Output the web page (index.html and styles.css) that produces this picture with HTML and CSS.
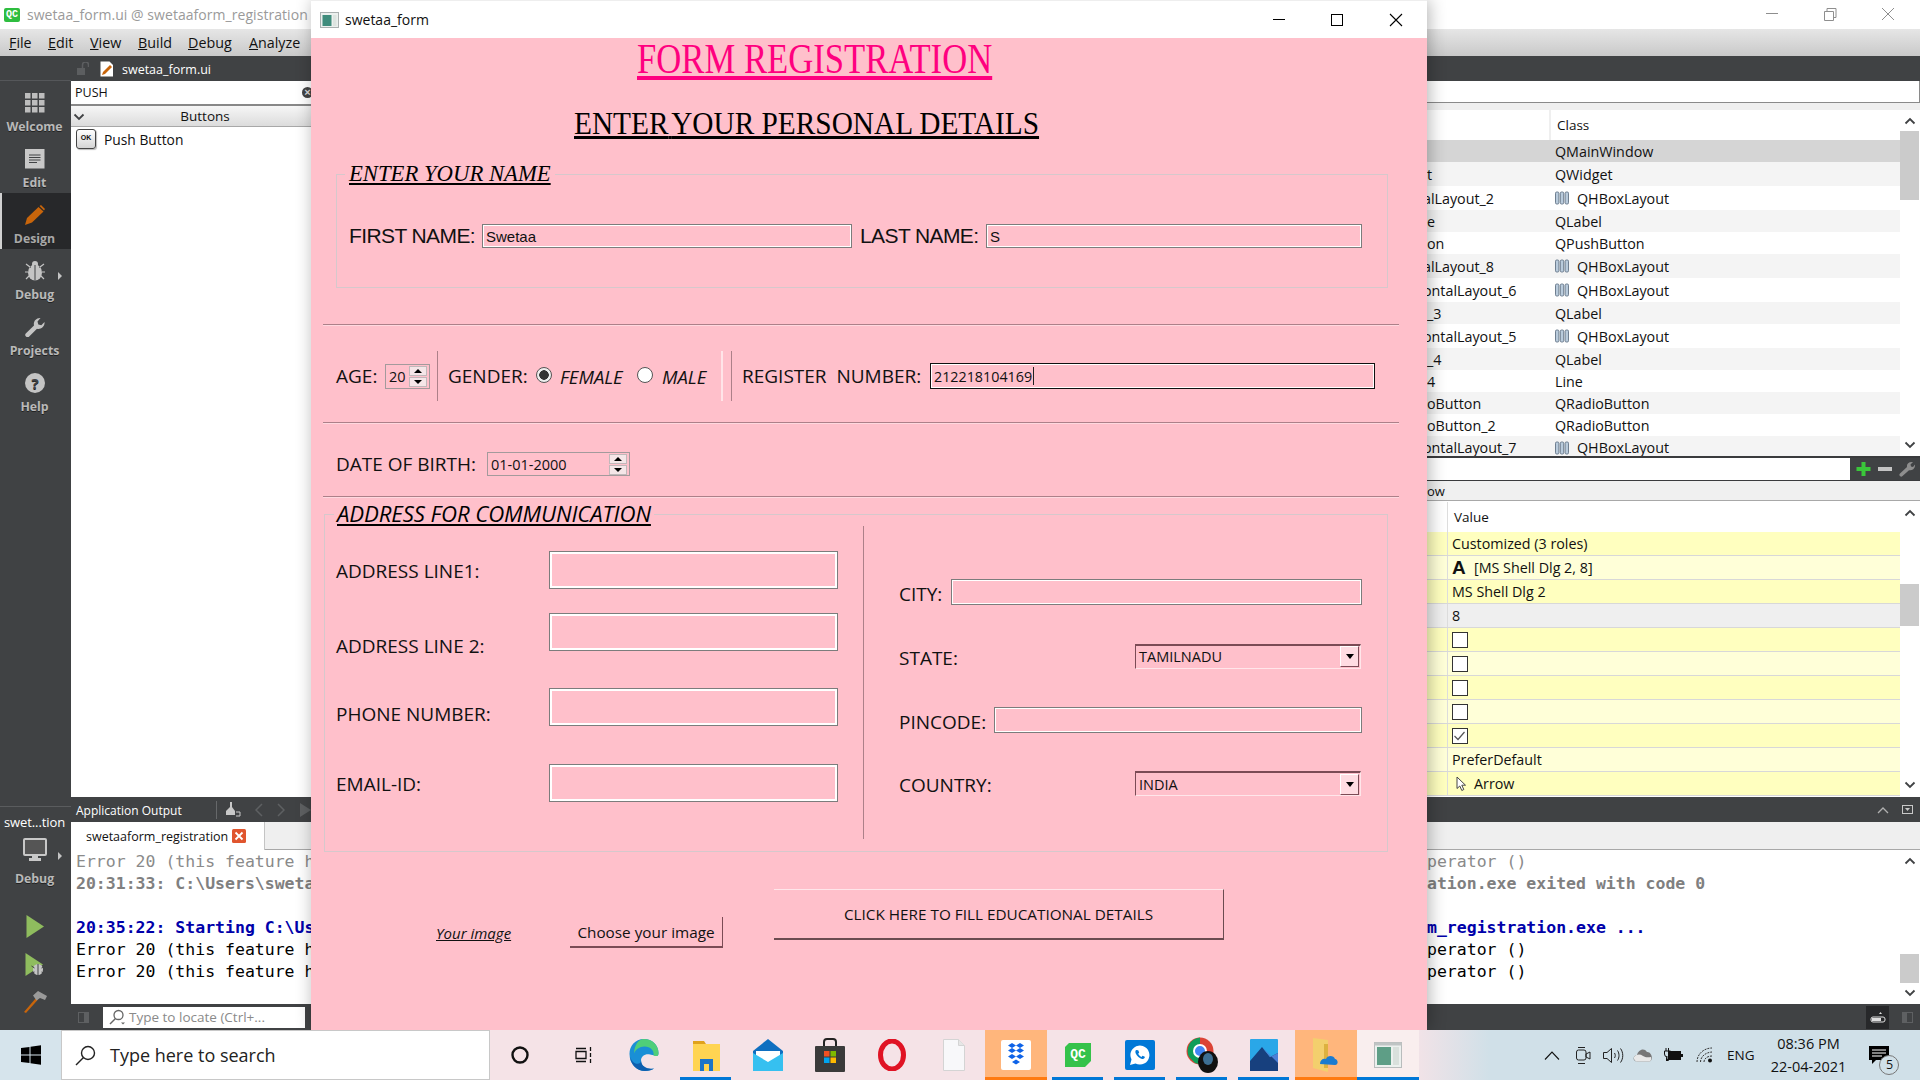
FILE: index.html
```html
<!DOCTYPE html>
<html lang="en">
<head>
<meta charset="utf-8">
<title>swetaa_form</title>
<link rel="stylesheet" href="styles.css">
</head>
<body>
<svg class="defs" width="0" height="0" aria-hidden="true">
  <symbol id="hbox" viewBox="0 0 14 14">
    <g fill="#b9cbdc" stroke="#6f7f90" stroke-width="1"><rect x="0.5" y="1" width="3.4" height="12" rx="1.2"/><rect x="5.3" y="1" width="3.4" height="12" rx="1.2"/><rect x="10.1" y="1" width="3.4" height="12" rx="1.2"/></g>
  </symbol>
  <symbol id="chev-up" viewBox="0 0 12 8"><path d="M1.5 6.5 6 2l4.500 4.500" fill="none" stroke="#404244" stroke-width="1.800"/></symbol>
  <symbol id="chev-down" viewBox="0 0 12 8"><path d="M1.500 1.500 6 6l4.500-4.500" fill="none" stroke="#404244" stroke-width="1.800"/></symbol>
</svg>
<div class="desktop">
  <div class="creator">
    <header class="c-title">
      <span class="qc-logo">QC</span>
      <span class="c-title-text">swetaa_form.ui @ swetaaform_registration</span>
      <div class="win-controls win-controls-dim">
        <svg width="58" height="29" viewBox="0 0 58 29"><path d="M23 13.500h12" stroke="#8e8e8e"/></svg>
        <svg width="58" height="29" viewBox="0 0 58 29"><path d="M23.500 11.500h9v9h-9zM26 11.500V8.500h9v9h-2.500" fill="none" stroke="#8e8e8e"/></svg>
        <svg width="58" height="29" viewBox="0 0 58 29"><path d="M23 8l12 12M35 8 23 20" stroke="#8e8e8e"/></svg>
      </div>
    </header>
    <nav class="c-menu">
      <span class="m-file"><u>F</u>ile</span>
      <span class="m-edit"><u>E</u>dit</span>
      <span class="m-view"><u>V</u>iew</span>
      <span class="m-build"><u>B</u>uild</span>
      <span class="m-debug"><u>D</u>ebug</span>
      <span class="m-analyze"><u>A</u>nalyze</span>
    </nav>
    <div class="c-body">
      <aside class="sidebar">
        <div class="side-top"></div>
        <div class="mode">
          <svg class="mode-icon" viewBox="0 0 20 20"><g fill="#bdbdbd"><rect x="0" y="0" width="5.500" height="5.500"/><rect x="7" y="0" width="5.500" height="5.500"/><rect x="14" y="0" width="5.500" height="5.500"/><rect x="0" y="7" width="5.500" height="5.500"/><rect x="7" y="7" width="5.500" height="5.500"/><rect x="14" y="7" width="5.500" height="5.500"/><rect x="0" y="14" width="5.500" height="5.500"/><rect x="7" y="14" width="5.500" height="5.500"/><rect x="14" y="14" width="5.500" height="5.500"/></g></svg>
          <span>Welcome</span>
        </div>
        <div class="mode">
          <svg class="mode-icon" viewBox="0 0 20 20"><rect width="19.500" height="19.500" fill="#c8c8c8"/><path d="M4 6h11.500M4 8.500h11.500M4 11h11.500M4 13.500h8" stroke="#404244" stroke-width="1"/></svg>
          <span>Edit</span>
        </div>
        <div class="mode mode-active">
          <svg class="mode-icon" viewBox="0 0 20 20"><path d="M0 20 2 13 13.500 2l5 4.500L7 17.500z" fill="#c8650b"/><path d="M14.500 1 16 0l4 4-1 1.500z" fill="#c8650b"/></svg>
          <span>Design</span>
        </div>
        <div class="mode mode-more">
          <svg class="mode-icon" viewBox="0 0 20 20"><ellipse cx="10" cy="11.500" rx="7" ry="8" fill="#c4c4c4"/><circle cx="10" cy="3" r="3" fill="#c4c4c4"/><path d="M10 4v15.500M3 4 6 6.500M17 4l-3 2.500M0 11h3M17 11h3M1 18l3-3M19 18l-3-3" stroke="#404244" stroke-width="1"/><path d="M1 3 5 6M19 3l-4 3M0 11h3M17 11h3M1 18l3-3M19 18l-3-3" stroke="#c4c4c4" stroke-width="1.200"/></svg>
          <span>Debug</span>
        </div>
        <div class="mode">
          <svg class="mode-icon" viewBox="0 0 20 20"><path d="M1 19.500c-1.200-1.200-1-2.200 0-3.200L9 8.500C8.200 5 10.500.8 15.500 1l-3 3.500.8 3 3 .8L19.500 5c.6 5-4 7.800-7.500 6.800l-7.800 7.800c-1 1-2.200 1-3.200-.1z" fill="#c4c4c4"/></svg>
          <span>Projects</span>
        </div>
        <div class="mode mode-help">
          <svg class="mode-icon" viewBox="0 0 20 20"><circle cx="10" cy="10" r="10" fill="#c4c4c4"/><text x="10" y="15.500" text-anchor="middle" class="help-q">?</text></svg>
          <span>Help</span>
        </div>
        <div class="kit">
          <span class="kit-name">swet...tion</span>
          <svg class="kit-monitor" width="24" height="24" viewBox="0 0 24 24"><rect x="1" y="1" width="22" height="16" rx="1" fill="#555" stroke="#c8c8c8" stroke-width="2"/><path d="M9 17h6v3h3v3H6v-3h3z" fill="#c8c8c8"/></svg>
          <span class="kit-label">Debug</span>
        </div>
        <div class="run-tools">
          <svg width="20" height="23" viewBox="0 0 20 23"><path d="M1.500 0 19 11.500 1.500 23z" fill="#8fbc5e"/></svg>
          <svg width="22" height="23" viewBox="0 0 22 23"><path d="M1.500 0 19 11.500 1.500 23z" fill="#8fbc5e"/><ellipse cx="14" cy="16.500" rx="5" ry="5.500" fill="#c4c4c4"/><path d="M14 11v11M7.500 13l3 2M20.500 13l-3 2M7.500 21l3-2M20.500 21l-3-2" stroke="#404244" stroke-width="1"/></svg>
          <svg width="24" height="22" viewBox="0 0 24 22"><path d="M1 21 13 7l2 1.500L3 22z" fill="#c8650b"/><path d="M10 4.500 15 0l9 5-2 4-5-2-3.500 2.500z" fill="#9a9a9a"/></svg>
        </div>
      </aside>
      <main class="panes">
        <div class="bar bar-doc">
          <div class="doc-left">
            <svg width="12" height="14" viewBox="0 0 12 14"><rect x="0" y="6" width="8" height="7" fill="#5c5e60"/><path d="M5.500 6V3a3 3 0 0 1 6 0v2" fill="none" stroke="#5c5e60" stroke-width="1.500"/></svg>
            <svg width="14" height="16" viewBox="0 0 14 16"><path d="M.5.500h9l3.500 3.500v11.500H.5z" fill="#fff"/><path d="M2 14l1-3 7-7 2 2-7 7z" fill="#c8650b"/></svg>
            <span class="doc-name">swetaa_form.ui</span>
          </div>
        </div>
        <div class="workspace">
          <section class="widget-box">
            <div class="filter">
              <span class="filter-text">PUSH</span>
              <span class="filter-clear">×</span>
            </div>
            <div class="category">
              <svg class="cat-chev" width="12" height="8"><use href="#chev-down"/></svg>
              <span>Buttons</span>
            </div>
            <div class="widget-item">
              <span class="pb-icon">OK</span>
              <span>Push Button</span>
            </div>
          </section>
          <section class="right-dock">
            <div class="right-search"></div>
            <div class="gap-strip"></div>
            <div class="inspector">
              <div class="tree">
                <div class="tree-head"><span class="th-name"></span><span class="th-class">Class</span></div>
                <div class="tr tr-sel"><span class="td-name"></span><span class="td-class">QMainWindow</span></div>
                <div class="tr tr-alt tr-i"><span class="td-name">t</span><span class="td-class">QWidget</span></div>
                <div class="tr tr-i"><span class="td-name td-cut">alLayout_2</span><span class="td-class"><svg class="hb"><use href="#hbox"/></svg>QHBoxLayout</span></div>
                <div class="tr tr-alt"><span class="td-name">e</span><span class="td-class">QLabel</span></div>
                <div class="tr"><span class="td-name">on</span><span class="td-class">QPushButton</span></div>
                <div class="tr tr-alt tr-i"><span class="td-name td-cut">alLayout_8</span><span class="td-class"><svg class="hb"><use href="#hbox"/></svg>QHBoxLayout</span></div>
                <div class="tr tr-i"><span class="td-name td-cut">ontalLayout_6</span><span class="td-class"><svg class="hb"><use href="#hbox"/></svg>QHBoxLayout</span></div>
                <div class="tr tr-alt"><span class="td-name">_3</span><span class="td-class">QLabel</span></div>
                <div class="tr tr-i"><span class="td-name td-cut">ontalLayout_5</span><span class="td-class"><svg class="hb"><use href="#hbox"/></svg>QHBoxLayout</span></div>
                <div class="tr tr-alt"><span class="td-name">_4</span><span class="td-class">QLabel</span></div>
                <div class="tr"><span class="td-name">4</span><span class="td-class">Line</span></div>
                <div class="tr tr-alt"><span class="td-name">oButton</span><span class="td-class">QRadioButton</span></div>
                <div class="tr"><span class="td-name">oButton_2</span><span class="td-class">QRadioButton</span></div>
                <div class="tr tr-alt tr-last"><span class="td-name td-cut">ontalLayout_7</span><span class="td-class"><svg class="hb"><use href="#hbox"/></svg>QHBoxLayout</span></div>
              </div>
              <div class="vbar">
                <svg class="vb-arrow" width="12" height="8"><use href="#chev-up"/></svg>
                <div class="thumb thumb-a"></div>
                <svg class="vb-arrow vb-end" width="12" height="8"><use href="#chev-down"/></svg>
              </div>
            </div>
            <div class="prop-filter">
              <div class="prop-tools">
                <svg width="16" height="16" viewBox="0 0 16 16"><path d="M5.500 1h4v5h5v4h-5v5h-4v-5H.5V6h5z" fill="#3ac73a"/></svg>
                <svg width="16" height="16" viewBox="0 0 16 16"><rect x="1" y="6" width="14" height="4" fill="#c4c4c4"/></svg>
                <svg width="16" height="16" viewBox="0 0 16 16"><path d="M1 15c-1-1-.8-1.800 0-2.600L8 6C7.500 3 9.500.5 14 1l-2.500 2.500.5 2 2 .5L16 3.500c.5 4-3 6.500-6 5.700L3.500 15c-.8.8-1.700 1-2.500 0z" fill="#8e8e8e"/></svg>
              </div>
            </div>
            <div class="prop-title"><span>ow</span></div>
            <div class="inspector">
              <div class="props">
                <div class="prop-head"><span class="pc-name"></span><span class="pc-value">Value</span></div>
                <div class="pr pr-y"><span class="pc-name"></span><span class="pc-val">Customized (3 roles)</span></div>
                <div class="pr pr-l"><span class="pc-name"></span><span class="pc-val"><b class="font-a">A</b>[MS Shell Dlg 2, 8]</span></div>
                <div class="pr pr-y"><span class="pc-name"></span><span class="pc-val">MS Shell Dlg 2</span></div>
                <div class="pr pr-g"><span class="pc-name"></span><span class="pc-val">8</span></div>
                <div class="pr pr-y"><span class="pc-name"></span><span class="pc-val"><i class="cb"></i></span></div>
                <div class="pr pr-l"><span class="pc-name"></span><span class="pc-val"><i class="cb"></i></span></div>
                <div class="pr pr-y"><span class="pc-name"></span><span class="pc-val"><i class="cb"></i></span></div>
                <div class="pr pr-l"><span class="pc-name"></span><span class="pc-val"><i class="cb"></i></span></div>
                <div class="pr pr-y"><span class="pc-name"></span><span class="pc-val"><i class="cb"><svg width="13" height="13" viewBox="0 0 13 13"><path d="M1.500 7 5 10.500 11.500 3" fill="none" stroke="#555" stroke-width="1.200"/></svg></i></span></div>
                <div class="pr pr-l"><span class="pc-name"></span><span class="pc-val">PreferDefault</span></div>
                <div class="pr pr-y"><span class="pc-name"></span><span class="pc-val"><svg class="cursor" width="10" height="16" viewBox="0 0 10 16"><path d="M1 1v11.500l2.800-2.500 2 4.500 2-1-2-4.300H9.500z" fill="#fff" stroke="#444"/></svg>Arrow</span></div>
              </div>
              <div class="vbar">
                <svg class="vb-arrow" width="12" height="8"><use href="#chev-up"/></svg>
                <div class="thumb thumb-b"></div>
                <svg class="vb-arrow vb-end" width="12" height="8"><use href="#chev-down"/></svg>
              </div>
            </div>
          </section>
        </div>
        <div class="bar bar-out">
          <div class="out-left">
            <span class="out-title">Application Output</span>
            <i class="out-sep"></i>
            <svg width="16" height="15" viewBox="0 0 16 15"><path d="M5 0h2v5l3 4H1l4-4z" fill="#c8c8c8"/><path d="M1 9h9v4H1z" fill="#c8c8c8"/><path d="M11 10h4v4h-4" fill="none" stroke="#c8c8c8"/></svg>
            <svg class="dim-icon" width="8" height="14" viewBox="0 0 8 14"><path d="M7 1 1 7l6 6" fill="none" stroke="#5e6062" stroke-width="1.500"/></svg>
            <svg class="dim-icon" width="8" height="14" viewBox="0 0 8 14"><path d="m1 1 6 6-6 6" fill="none" stroke="#5e6062" stroke-width="1.500"/></svg>
            <svg class="dim-icon" width="11" height="14" viewBox="0 0 11 14"><path d="M0 0l11 7-11 7z" fill="#5e6062"/></svg>
          </div>
          <div class="out-right">
            <svg width="12" height="8" viewBox="0 0 12 8"><path d="M1 7l5-5 5 5" fill="none" stroke="#b0b0b0" stroke-width="1.300"/></svg>
            <svg width="11" height="9" viewBox="0 0 11 9"><rect x=".5" y=".5" width="10" height="8" fill="none" stroke="#c8c8c8"/><path d="M3 3h5L5.500 6z" fill="#c8c8c8"/></svg>
          </div>
        </div>
        <div class="tabs">
          <div class="tab">
            <span>swetaaform_registration</span>
            <svg width="14" height="14" viewBox="0 0 14 14"><rect width="14" height="14" rx="1.500" fill="#e0552e"/><path d="M3.500 3.500l7 7M10.500 3.500l-7 7" stroke="#fff" stroke-width="1.800"/></svg>
          </div>
        </div>
        <div class="output">
          <div class="log log-left">
            <div class="ln ln-dim">Error 20 (this feature h</div>
            <div class="ln ln-dimb">20:31:33: C:\Users\sweta</div>
            <div class="ln">&nbsp;</div>
            <div class="ln ln-blue">20:35:22: Starting C:\Us</div>
            <div class="ln">Error 20 (this feature h</div>
            <div class="ln">Error 20 (this feature h</div>
          </div>
          <div class="log-right">
            <div class="log">
              <div class="ln ln-dim">perator ()</div>
              <div class="ln ln-dimb">ation.exe exited with code 0</div>
              <div class="ln">&nbsp;</div>
              <div class="ln ln-blue">m_registration.exe ...</div>
              <div class="ln">perator ()</div>
              <div class="ln">perator ()</div>
            </div>
            <div class="vbar">
              <svg class="vb-arrow" width="12" height="8"><use href="#chev-up"/></svg>
              <div class="thumb thumb-c"></div>
              <svg class="vb-arrow vb-end" width="12" height="8"><use href="#chev-down"/></svg>
            </div>
          </div>
        </div>
        <div class="bar bar-status">
          <div class="status-left">
            <svg width="11" height="11" viewBox="0 0 11 11"><rect width="11" height="11" fill="#5e6062"/><rect x="1" y="1" width="5" height="9" fill="#404244"/></svg>
            <div class="locator">
              <svg width="17" height="17" viewBox="0 0 17 17"><circle cx="9.500" cy="6" r="4.500" fill="none" stroke="#666" stroke-width="1.300"/><path d="M6.500 9.500 1 15" stroke="#666" stroke-width="1.500"/><path d="M12 13.500h4l-2 2z" fill="#666"/></svg>
              <span>Type to locate (Ctrl+...</span>
            </div>
          </div>
          <div class="status-right">
            <span class="status-active"><svg width="16" height="12" viewBox="0 0 16 12"><rect x="1" y="6" width="14" height="5" rx="2" fill="none" stroke="#ddd"/><rect x="2" y="7" width="9" height="3" fill="#ddd"/><path d="M12 3h-3l1.500-2z" fill="#ddd"/></svg></span>
            <svg width="11" height="11" viewBox="0 0 11 11"><rect width="11" height="11" fill="#5e6062"/><rect x="5" y="1" width="5" height="9" fill="#404244"/></svg>
          </div>
        </div>
      </main>
    </div>
  </div>

  <footer class="taskbar">
    <div class="start"><svg width="20" height="20" viewBox="0 0 20 20"><path d="M0 3.100 8.500 2v7.500H0zM9.500 1.800 20 .3v9.200H9.500zM0 10.500h8.500V18L0 16.900zM9.500 10.500H20v9.200L9.500 18.200z" fill="#000"/></svg></div>
    <div class="search">
      <svg width="21" height="21" viewBox="0 0 21 21"><circle cx="13" cy="8" r="6.500" fill="none" stroke="#222" stroke-width="1.400"/><path d="M8.500 12.500 1 20" stroke="#222" stroke-width="1.500"/></svg>
      <span>Type here to search</span>
    </div>
    <div class="tasks">
      <div class="task"><svg width="20" height="20" viewBox="0 0 20 20"><circle cx="10" cy="10" r="7.500" fill="none" stroke="#111" stroke-width="2.400"/></svg></div>
      <div class="task"><svg width="20" height="20" viewBox="0 0 20 20"><path d="M4 3.500h10M4 16.500h10M4 6.500h10v7H4zM18.500 2v4M18.500 8v4M18.500 14v4" fill="none" stroke="#111" stroke-width="1.300"/></svg></div>
      <div class="task"><svg width="30" height="32" viewBox="0 0 30 32"><path d="M15 0C6 0 .5 7 .5 15 .5 25 8 32 16 32c4 0 7-1 9-2.500-6 1.500-13-1-13-8 0-4 4-7 9-6 6 1 8.500 3 8.500-1.500C29.500 6 23 0 15 0z" fill="#1a8fd6"/><path d="M15 0c8 0 14.500 6 14.500 14 0 3.500-2 3.500-5 2.500 1-5-3-9-9-9-5 0-9 3-10.500 7C5.500 6.500 9 0 15 0z" fill="#4fce7a"/><path d="M12 21c0 7 7 9.500 13 8.500-2 1.500-5 2.500-9 2.500C8 32 2 26 1 18c3 8 11 9 11 3z" fill="#0e5fae"/></svg></div>
      <div class="task task-run"><svg width="27" height="32" viewBox="0 0 27 32"><path d="M0 2h11l2 3H0z" fill="#e0a21c"/><path d="M0 5h27v27H0z" fill="#ffd452"/><path d="M7 20h13v12h-4v-7h-5v7H7z" fill="#1c74c8"/></svg></div>
      <div class="task"><svg width="30" height="32" viewBox="0 0 30 32"><path d="M0 12 15 0l15 12v20H0z" fill="#0f6fc0"/><path d="M3 12h24v6L15 25 3 18z" fill="#fff"/><path d="M0 14l15 9 15-9v18H0z" fill="#36c0f0"/></svg></div>
      <div class="task"><svg width="30" height="34" viewBox="0 0 30 34"><path d="M9 9V4a3 3 0 0 1 3-3h6a3 3 0 0 1 3 3v5" fill="none" stroke="#222" stroke-width="2"/><rect y="8" width="30" height="26" rx="1" fill="#3a3a3a"/><rect x="9" y="13" width="5.500" height="5.500" fill="#f25022"/><rect x="15.500" y="13" width="5.500" height="5.500" fill="#7fba00"/><rect x="9" y="19.500" width="5.500" height="5.500" fill="#00a4ef"/><rect x="15.500" y="19.500" width="5.500" height="5.500" fill="#ffb900"/></svg></div>
      <div class="task"><svg width="28" height="32" viewBox="0 0 28 32"><ellipse cx="14" cy="16" rx="11.500" ry="14" fill="none" stroke="#e01324" stroke-width="5"/></svg></div>
      <div class="task"><svg width="22" height="32" viewBox="0 0 22 32"><path d="M.5.500h15l6 6v25H.5z" fill="#f8f8fa" stroke="#d4d4d4"/><path d="M15.500.5v6h6" fill="#e6e6e6" stroke="#d4d4d4"/></svg></div>
      <div class="task task-open">
        <div class="tile tile-white"><svg width="16" height="24" viewBox="0 0 16 24"><g fill="#0e63e8"><path d="M4 0l4 2.500L4 5 0 2.500zM12 0l4 2.500L12 5 8 2.500zM4 5l4 2.500L4 10 0 7.500zM12 5l4 2.500-4 2.500-4-2.500zM4 11l4 2.500L4 16l-4-2.500zM12 11l4 2.500-4 2.500-4-2.500zM8 16.500l4 2.500-4 2.500L4 19z"/></g></svg></div>
      </div>
      <div class="task task-run"><span class="qc-tile">QC</span></div>
      <div class="task task-run"><div class="tile tile-wa"><svg width="22" height="22" viewBox="0 0 22 22"><path d="M1 21l1.500-5.500A9.500 9.500 0 1 1 6.500 19.500z" fill="#fff"/><path d="M7 6c-1 1-1 3 1 5.500s4.500 3.800 6 3.500 2-1.500 1.800-2.200l-2.300-1-1 1.200c-1-.3-2.800-2-3.300-3.200l1-1.200-1-2.300z" fill="#0078d7"/></svg></div></div>
      <div class="task task-run"><svg width="32" height="36" viewBox="0 0 32 36"><circle cx="14" cy="14" r="13.500" fill="#db4437"/><path d="M14 .5A13.500 13.500 0 0 0 3 20l6 6 5 1.500z" fill="#0f9d58"/><circle cx="14" cy="14" r="6" fill="#4285f4" stroke="#fff" stroke-width="2"/><ellipse cx="22" cy="25" rx="10" ry="11" fill="#111"/><ellipse cx="22" cy="22" rx="5" ry="6" fill="#3d6f94"/></svg></div>
      <div class="task task-run"><svg width="28" height="32" viewBox="0 0 28 32"><rect width="28" height="32" rx="1" fill="#2aa7e8"/><path d="M0 32V22L12 8l8 10 8-4v18z" fill="#17407e"/><path d="M12 8l8 10 8-4v10z" fill="#4b7fd6"/></svg></div>
      <div class="task task-open task-folder"><svg width="26" height="34" viewBox="0 0 26 34"><path d="M0 0l15 2v32L0 30z" fill="#f3cf6d"/><path d="M15 6h-4v24h4z" fill="#ddb13f"/><path d="M7 26c0-4 3-6 6-5 1-4 8-4 9 0 3 0 4 6 0 6z" fill="#1a7bd0"/></svg></div>
      <div class="task task-app"><svg width="28" height="26" viewBox="0 0 28 26"><rect x=".5" y=".5" width="27" height="25" fill="#ecf0ee" stroke="#b8bcbc"/><rect x=".5" y=".5" width="27" height="3" fill="#bfc4c4"/><rect x="3" y="5" width="14" height="18" fill="#5e9e86"/><rect x="19" y="5" width="6" height="18" fill="#d9e0dc"/></svg></div>
    </div>
    <div class="tray">
      <svg width="16" height="9" viewBox="0 0 16 9"><path d="M1 8.500 8 1l7 7.500" fill="none" stroke="#111" stroke-width="1.100"/></svg>
      <svg width="15" height="19" viewBox="0 0 15 19"><rect x=".5" y="4" width="9.500" height="10" rx="2" fill="none" stroke="#222"/><path d="M10 8l4-2v7l-4-2z" fill="none" stroke="#222"/><path d="M2 1.500h7M2 17.500h7" stroke="#222"/></svg>
      <svg width="21" height="17" viewBox="0 0 21 17"><path d="M.5 5.500H4L8.500 1.500v14L4 11.500H.5z" fill="none" stroke="#222"/><path d="M11.500 6c1 1.500 1 3.500 0 5M14.500 3.500c2 3 2 7 0 10M17.500 1.500c3 4 3 10 0 14" fill="none" stroke="#222"/></svg>
      <svg width="20" height="14" viewBox="0 0 20 14"><path d="M4 13.500c-4.500 0-4.500-6 0-6.500C5 2 11-1 14 4c4.500-.5 7 8 2.500 9.500z" fill="#777"/><path d="M1 9c3-3 6-3 9-1s6 1 8 1c1 3-1 4.500-1.500 4.500H4C2 13.500.5 11 1 9z" fill="#e8e8e8"/></svg>
      <svg width="20" height="14" viewBox="0 0 20 14"><path d="M3 0v3M5.500 0v3M1.500 3h6v3a3 3 0 0 1-6 0z" fill="none" stroke="#111"/><rect x="5" y="3" width="13" height="9" fill="#111"/><path d="M18 6h2v3h-2zM3 8v5h3" fill="#111"/></svg>
      <svg width="18" height="16" viewBox="0 0 18 16"><path d="M1 15C1 7 8 1 16 1M4.500 15c0-5 4.500-9.500 11.500-10M8 15c0-3 3-6 8-6" fill="none" stroke="#333" stroke-dasharray="2 1"/><circle cx="14" cy="13.500" r="2" fill="#111"/></svg>
      <span class="tray-lang">ENG</span>
      <div class="clock"><span>08:36 PM</span><span>22-04-2021</span></div>
      <div class="notif">
        <svg width="20" height="18" viewBox="0 0 20 18"><path d="M0 0h20v14H7l-4 4v-4H0z" fill="#000"/><path d="M3 4h14M3 7h14M3 10h10" stroke="#fff"/></svg>
        <span class="badge">5</span>
      </div>
    </div>
  </footer>

  <div class="form-win">
    <div class="form-title">
      <svg width="19" height="16" viewBox="0 0 19 16"><rect x=".5" y=".5" width="18" height="15" fill="#ecf0ee" stroke="#aab0b0"/><rect x="2.500" y="3" width="9" height="11" fill="#3f8c7c"/><rect x="13" y="3" width="3.500" height="11" fill="#dde4e0"/></svg>
      <span class="form-title-text">swetaa_form</span>
      <div class="win-controls">
        <svg width="58" height="36" viewBox="0 0 58 36"><path d="M23 17.500h12" stroke="#000"/></svg>
        <svg width="58" height="36" viewBox="0 0 58 36"><rect x="23.500" y="12.500" width="11" height="11" fill="none" stroke="#000"/></svg>
        <svg width="58" height="36" viewBox="0 0 58 36"><path d="M24 12l12 12M36 12 24 24" stroke="#000" stroke-width="1.100"/></svg>
      </div>
    </div>
    <div class="form-body">
      <h1 class="h-form">FORM REGISTRATION</h1>
      <h2 class="h-personal">ENTER<span class="tight"> </span>YOUR PERSONAL DETAILS</h2>

      <section class="group group-name">
        <span class="legend legend-serif">ENTER YOUR NAME</span>
        <div class="name-row">
          <label class="lbl-arial lbl-first">FIRST NAME:</label>
          <div class="field f-first">Swetaa</div>
          <label class="lbl-arial lbl-last">LAST NAME:</label>
          <div class="field f-last">S</div>
        </div>
      </section>

      <div class="hline hline-1"></div>

      <div class="row-id">
        <label class="lbl">AGE:</label>
        <div class="spin spin-age"><span>20</span><div class="spin-btns"><i class="up"></i><i class="down"></i></div></div>
        <i class="vline"></i>
        <label class="lbl">GENDER:</label>
        <i class="radio radio-on"></i>
        <span class="opt">FEMALE</span>
        <i class="radio"></i>
        <span class="opt">MALE</span>
        <i class="vline vline-pale"></i>
        <i class="vline"></i>
        <label class="lbl lbl-reg">REGISTER&nbsp; NUMBER:</label>
        <div class="field field-focus f-reg">212218104169<i class="caret"></i></div>
      </div>

      <div class="hline hline-2"></div>

      <div class="row-dob">
        <label class="lbl">DATE OF BIRTH:</label>
        <div class="spin spin-date"><span>01-01-2000</span><div class="spin-btns"><i class="up"></i><i class="down"></i></div></div>
      </div>

      <div class="hline hline-3"></div>

      <section class="group group-addr">
        <span class="legend legend-sans">ADDRESS FOR COMMUNICATION</span>
        <div class="addr-labels">
          <label class="lbl">ADDRESS LINE1:</label>
          <label class="lbl">ADDRESS LINE 2:</label>
          <label class="lbl">PHONE NUMBER:</label>
          <label class="lbl">EMAIL-ID:</label>
        </div>
        <div class="addr-fields">
          <div class="field"></div>
          <div class="field"></div>
          <div class="field"></div>
          <div class="field"></div>
        </div>
        <i class="addr-divider"></i>
        <div class="addr-right">
          <div class="ar-row">
            <label class="lbl lbl-city">CITY:</label>
            <div class="field f-city"></div>
          </div>
          <div class="ar-row">
            <label class="lbl">STATE:</label>
            <div class="combo"><span>TAMILNADU</span><i class="combo-btn"></i></div>
          </div>
          <div class="ar-row">
            <label class="lbl lbl-pin">PINCODE:</label>
            <div class="field f-pin"></div>
          </div>
          <div class="ar-row">
            <label class="lbl">COUNTRY:</label>
            <div class="combo"><span>INDIA</span><i class="combo-btn"></i></div>
          </div>
        </div>
      </section>

      <div class="row-actions">
        <span class="your-image">Your image</span>
        <div class="btn btn-choose">Choose your image</div>
        <div class="btn btn-click">CLICK HERE TO FILL EDUCATIONAL DETAILS</div>
      </div>
    </div>
  </div>
</div>
</body>
</html>
```

FILE: styles.css
```css
:root {
  --ui: "Open Sans", "Noto Sans", sans-serif;
  --dark: #404244;
  --pink: #ffc0cb;
}
* { box-sizing: border-box; }
html, body { margin: 0; padding: 0; }
body { width: 1920px; height: 1080px; overflow: hidden; font-family: var(--ui); font-size: 14px; color: #111; }
.defs { position: absolute; }
svg { display: block; flex: none; }
i { font-style: normal; }
.desktop { position: relative; width: 1920px; height: 1080px; display: flex; flex-direction: column; overflow: hidden; }

/* Qt Creator window */
.creator { height: 1030px; display: flex; flex-direction: column; background: #fff; }
.c-title { height: 29px; display: flex; align-items: center; padding-left: 4px; background: #fff; }
.qc-logo { width: 16px; height: 14px; border-radius: 2px; background: #2ebd3f; color: #fff; font: 700 10px/14px "Liberation Mono", monospace; text-align: center; }
.c-title-text { margin-left: 7px; font-size: 14px; color: #9a9a9a; white-space: nowrap; letter-spacing: .05px; }
.win-controls { display: flex; margin-left: auto; }
.win-controls-dim { margin-right: 3px; }
.c-menu { height: 27px; display: flex; align-items: center; background: linear-gradient(#e6e6e6, #c9c9c9); font-size: 14.300px; color: #111; white-space: nowrap; padding-left: 9px; }
.c-menu span { display: block; }
.m-file { width: 39px; }
.m-edit { width: 42px; }
.m-view { width: 48px; }
.m-build { width: 50px; }
.m-debug { width: 61px; }
.c-body { flex: 1; display: flex; min-height: 0; }

.sidebar { width: 71px; flex: none; background: var(--dark); display: flex; flex-direction: column; }
.side-top { height: 25px; border-bottom: 1px solid #55575a; }
.mode { height: 56px; display: flex; flex-direction: column; align-items: center; padding: 12px 2px 0 0; color: #b9b9b9; font-weight: 700; font-size: 12.300px; position: relative; text-shadow: 0 1px 0 #222; }
.mode span { margin-top: 6px; line-height: 15px; }
.mode-icon { width: 20px; height: 20px; }
.mode-active { background: #27282a; border-left: 2px solid #d0d0d0; color: #a8a8a8; padding-right: 4px; }
.mode-more::after { content: ""; position: absolute; right: 9px; top: 23px; border-left: 4px solid #c4c4c4; border-top: 4px solid transparent; border-bottom: 4px solid transparent; }
.help-q { font: 700 15px "Open Sans", sans-serif; fill: #404244; }
.kit { margin-top: 389px; border-top: 1px solid #5a5c5e; height: 88px; display: flex; flex-direction: column; align-items: center; position: relative; color: #fff; padding-right: 2px; }
.kit::after { content: ""; position: absolute; right: 9px; top: 45px; border-left: 4px solid #c4c4c4; border-top: 4px solid transparent; border-bottom: 4px solid transparent; }
.kit-name { font-size: 13px; line-height: 16px; margin-top: 7px; letter-spacing: -.1px; }
.kit-monitor { margin-top: 8px; }
.kit-label { font-size: 12.300px; font-weight: 700; color: #b9b9b9; line-height: 15px; margin-top: 9px; text-shadow: 0 1px 0 #222; }
.run-tools { display: flex; flex-direction: column; align-items: center; gap: 15px; margin-top: 21px; padding-right: 2px; }

.panes { width: 1849px; flex: none; display: flex; flex-direction: column; min-height: 0; }
.bar { display: flex; justify-content: space-between; align-items: center; background: var(--dark); flex: none; }
.bar-doc { height: 25px; }
.doc-left { display: flex; align-items: center; padding-left: 6px; color: #fff; }
.doc-left svg:nth-child(2) { margin-left: 11px; }
.doc-name { margin-left: 8px; padding-top: 1px; font-size: 12.500px; white-space: nowrap; }
.workspace { height: 716px; display: flex; justify-content: space-between; background: #fff; flex: none; }

.widget-box { width: 240px; display: flex; flex-direction: column; background: #fff; }
.filter { height: 25px; border-bottom: 2px solid #888; background: #fff; display: flex; align-items: center; padding-left: 4px; position: relative; font-size: 12.500px; color: #111; }
.filter-clear { position: absolute; right: -2px; top: 6px; width: 11px; height: 11px; border-radius: 50%; background: #444; color: #ddd; font: 700 11px/11px "Liberation Sans", sans-serif; text-align: center; overflow: hidden; }
.category { height: 21px; background: linear-gradient(#f6f6f6, #dcdcdc); border-bottom: 1px solid #a8a8a8; display: flex; align-items: center; justify-content: center; position: relative; font-size: 13.500px; padding-left: 28px; }
.cat-chev { position: absolute; left: 2px; top: 7px; }
.widget-item { display: flex; align-items: center; padding: 2px 0 0 5px; gap: 8px; font-size: 13.800px; }
.pb-icon { width: 20px; height: 20px; border: 1px solid #444; border-radius: 3px; background: linear-gradient(#fff, #d4d4d4); box-shadow: 1px 1px 1px #bbb; font: 700 7px/16px "Liberation Sans", sans-serif; text-align: center; }

.right-dock { width: 493px; display: flex; flex-direction: column; background: #fff; }
.right-search { height: 22px; flex: none; background: #fff; border-bottom: 1px solid #8a8a8a; border-right: 1px solid #8a8a8a; }
.gap-strip { height: 7px; flex: none; background: #efefef; }
.inspector { display: flex; flex: none; background: #fff; }
.tree { width: 473px; flex: none; }
.tree-head { height: 30px; display: flex; background: #fff; }
.th-name { width: 124px; border-right: 2px solid #efefef; }
.th-class { padding: 6px 0 0 6px; font-size: 13.500px; }
.tr { height: 22px; display: flex; align-items: center; background: #fff; font-size: 14.300px; }
.tr-i { height: 24px; }
.tr-alt { background: #f4f4f4; }
.tr-sel { background: #d5d5d5; }
.tr-last { height: 20px; overflow: hidden; align-items: flex-start; padding-top: 2px; }
.td-name { width: 123px; flex: none; white-space: nowrap; overflow: hidden; }
.td-cut { text-indent: -4px; }
.td-class { display: flex; align-items: center; padding-left: 5px; white-space: nowrap; }
.hb { width: 14px; height: 14px; margin-right: 8px; }
.vbar { width: 20px; flex: none; background: #fff; display: flex; flex-direction: column; align-items: center; padding-top: 7px; }
.vb-end { margin-top: auto; margin-bottom: 7px; }
.thumb { align-self: stretch; background: #cbcbcb; margin-right: 1px; flex: none; }
.thumb-a { margin-top: 6px; height: 69px; }
.thumb-b { margin-top: 67px; height: 42px; }
.thumb-c { margin-top: 89px; height: 29px; }
.prop-filter { height: 25px; flex: none; background: #fff; border-top: 2px solid #3a3b3d; border-bottom: 1px solid #3a3b3d; display: flex; justify-content: flex-end; }
.prop-tools { width: 70px; height: 22px; background: var(--dark); display: flex; align-items: center; justify-content: space-evenly; }
.prop-title { height: 20px; flex: none; background: #f0f0f0; border-bottom: 1px solid #a8a8a8; font-size: 13px; line-height: 20px; margin-bottom: 1px; }
.props { width: 473px; flex: none; }
.prop-head { height: 30px; display: flex; background: #fff; }
.prop-head .pc-name { width: 21px; border-right: 1px solid #ddd; background: #fff; }
.pc-value { padding: 6px 0 0 6px; font-size: 13.500px; }
.pr { height: 24px; display: flex; align-items: stretch; border-bottom: 1px solid #d8d8d8; font-size: 14.300px; }
.pr .pc-name { width: 21px; flex: none; border-right: 1px solid #dcdcdc; }
.pc-val { display: flex; align-items: center; padding-left: 4px; white-space: nowrap; }
.pr-y { background: #ffffbf; }
.pr-l { background: #ffffd8; }
.pr-g { background: #efefef; }
.font-a { font: 700 19px/20px "Liberation Sans", sans-serif; width: 22px; display: block; }
.cb { width: 16px; height: 16px; border: 1px solid #333; background: #fff; display: block; }
.cursor { margin: 0 8px 0 4px; }

.bar-out { height: 25px; }
.out-left { display: flex; align-items: center; width: 240px; padding-left: 5px; color: #fff; overflow: hidden; }
.out-title { font-size: 12px; white-space: nowrap; width: 143px; padding-top: 1px; }
.out-sep { width: 1px; height: 18px; background: #66686a; margin-right: 8px; }
.dim-icon { margin-left: 14px; }
.out-left svg:last-child { margin-left: 15px; }
.out-right { display: flex; align-items: center; gap: 13px; padding-right: 7px; }
.tabs { height: 28px; flex: none; background: #efefef; border-bottom: 1px solid #a8a8a8; }
.tab { width: 194px; height: 28px; background: #fff; border-right: 1px solid #c4c4c4; display: flex; align-items: center; padding-left: 15px; gap: 4px; font-size: 12.500px; white-space: nowrap; }
.output { height: 154px; flex: none; background: #fff; display: flex; justify-content: space-between; }
.log { font: 16.500px/22px "DejaVu Sans Mono", monospace; overflow: hidden; color: #000; padding-top: 1px; }
.log-left { width: 240px; padding-left: 5px; }
.log-right { width: 493px; display: flex; }
.log-right .log { width: 473px; }
.ln { height: 22px; white-space: pre; }
.ln-dim { color: #8a8a8a; }
.ln-dimb { color: #808080; font-weight: 700; }
.ln-blue { color: #0000aa; font-weight: 700; }
.bar-status { height: 26px; }
.status-left { display: flex; align-items: center; width: 240px; padding-left: 7px; }
.locator { width: 202px; height: 21px; background: #fff; display: flex; align-items: center; margin-left: 14px; padding-left: 6px; gap: 3px; color: #8a8a8a; font-size: 13.500px; white-space: nowrap; overflow: hidden; }
.status-right { display: flex; align-items: center; gap: 13px; padding-right: 7px; }
.status-active { width: 23px; height: 23px; background: #27282a; display: flex; align-items: center; justify-content: center; }

/* Taskbar */
.taskbar { position: relative; z-index: 3; height: 50px; display: flex; align-items: center; background: linear-gradient(90deg, #d6e4ec 0, #d6e4ec 300px, #f5e3e7 360px, #f5e3e7 1410px, #d0e0e8 1490px); }
.start { width: 61px; display: flex; justify-content: center; }
.search { width: 429px; height: 50px; background: #fff; border: 1px solid #c8c8c8; display: flex; align-items: center; padding-left: 13px; gap: 14px; font-size: 18px; color: #222; }
.tasks { display: flex; margin-left: -1px; }
.task { width: 62px; height: 50px; display: flex; align-items: center; justify-content: center; position: relative; }
.task-run::after, .task-app::after { content: ""; position: absolute; left: 5px; right: 6px; bottom: 0; height: 3px; background: #0078d7; }
.task-open { background: #ffb67c; }
.task-open::after { content: ""; position: absolute; left: 0; right: 0; bottom: 0; height: 3px; background: #ff7a10; }
.task-app { background: #f9eeee; }
.task-app::after { left: 0; right: 0; }
.tile { width: 30px; height: 30px; border-radius: 2px; display: flex; align-items: center; justify-content: center; }
.tile-white { background: #fff; }
.tile-wa { background: #0078d7; }
.qc-tile { width: 26px; height: 24px; background: #35c24a; color: #fff; font: 700 13px/24px "Liberation Mono", monospace; text-align: center; clip-path: polygon(4px 0, 100% 0, 100% 18px, 20px 100%, 0 100%, 0 4px); }
.tray { flex: 1; display: flex; align-items: center; padding-left: 125px; position: relative; }
.tray > svg { margin-right: 15px; }
.tray > svg:nth-child(1) { margin-right: 16px; }
.tray > svg:nth-child(2) { margin-right: 12px; }
.tray > svg:nth-child(3) { margin-right: 9px; }
.tray > svg:nth-child(4) { margin-right: 10px; }
.tray > svg:nth-child(5) { margin-right: 13px; }
.tray-lang { font-size: 13.500px; margin-left: -2px; }
.clock { display: flex; flex-direction: column; align-items: center; font-size: 14.500px; line-height: 23px; margin-left: 16px; width: 76px; white-space: nowrap; }
.notif { position: relative; margin-left: 23px; }
.badge { position: absolute; left: 10px; top: 9px; width: 20px; height: 20px; border-radius: 50%; border: 1px solid #777; background: #d0e0e8; font-size: 12.500px; line-height: 18px; text-align: center; }

/* Form window */
.form-win { position: absolute; left: 311px; top: 0; width: 1116px; height: 1030px; z-index: 2; display: flex; flex-direction: column; box-shadow: 2px 0 16px rgba(0, 0, 0, .3); border-top: 1px solid #eee; }
.form-title { height: 37px; flex: none; background: #fff; display: flex; align-items: center; padding: 0 3px 0 9px; }
.form-title-text { margin-left: 6px; font-size: 14px; color: #111; }
.form-body { flex: 1; background: var(--pink); display: flex; flex-direction: column; min-height: 0; }

.h-form { margin: 0 0 0 326px; font: 400 42px/42px "Liberation Serif", serif; color: #ff007f; text-decoration: underline; white-space: nowrap; transform: scaleX(.825); transform-origin: left center; }
.h-personal { margin: 27px 0 0 263px; font: 400 32px/32px "Liberation Serif", serif; color: #000; text-decoration: underline; white-space: nowrap; transform: scaleX(.916); transform-origin: left center; }
.tight { letter-spacing: -5px; }

.group { position: relative; border: 1px solid #d6c8cc; }
.group-name { margin: 35px 0 0 25px; width: 1052px; height: 114px; padding: 49px 0 0 12px; }
.legend { position: absolute; background: var(--pink); white-space: nowrap; text-decoration: underline; font-style: italic; color: #000; }
.legend-serif { left: 8px; top: -12px; padding: 0 4px; font: italic 400 22.700px/22px "Liberation Serif", serif; }
.legend-sans { left: 9px; top: -14px; padding: 0 3px; font-size: 22.200px; line-height: 26px; letter-spacing: -.1px; }

.field { border: 1px solid #7c7c7c; box-shadow: inset 0 0 0 1px #fff; padding: 0 3px; display: flex; align-items: center; background: var(--pink); white-space: nowrap; font-size: 14.300px; }
.field-focus { border-color: #111; }
.name-row { display: flex; align-items: center; }
.lbl-arial { font: 400 21px/24px "Liberation Sans", sans-serif; letter-spacing: -.6px; white-space: nowrap; }
.lbl-first { width: 133px; }
.f-first { width: 370px; height: 24px; font-family: "Liberation Sans", sans-serif; font-size: 15px; }
.lbl-last { width: 126px; margin-left: 8px; }
.f-last { width: 376px; height: 24px; font-family: "Liberation Sans", sans-serif; font-size: 15px; }

.hline { flex: none; height: 2px; border-top: 1px solid #ad8089; border-bottom: 1px solid #ffd8df; margin-left: 12px; width: 1076px; }
.hline-1 { margin-top: 36px; }
.hline-2 { margin-top: 21px; }
.hline-3 { margin-top: 20px; }

.lbl { font-size: 19px; line-height: 24px; white-space: nowrap; }
.row-id { margin: 25px 0 0 25px; height: 50px; display: grid; grid-template-columns: 49px 52px 11px 88px 24px 77px 25px 59px 10px 11px 188px 445px; align-items: center; justify-items: start; }
.vline { width: 1px; height: 50px; background: #ad8089; }
.vline-pale { width: 2px; background: #ffe4e8; }
.radio { width: 16px; height: 16px; border-radius: 50%; background: #fff; border: 1px solid #555; margin-top: -3px; }
.radio-on { background: radial-gradient(circle, #333 0 4.500px, #eee 5px); }
.opt { font-style: italic; font-size: 18.500px; }
.f-reg { width: 445px; height: 26px; padding-left: 3px; }
.caret { width: 1px; height: 18px; background: #222; margin-left: 1px; }

.spin { display: flex; align-items: center; justify-content: space-between; border: 1px solid #a39a9c; padding: 0 2px 0 3px; font-size: 14.500px; }
.spin-age { width: 45px; height: 25px; }
.spin-date { width: 143px; height: 24px; }
.spin-btns { width: 18px; display: flex; flex-direction: column; gap: 1px; }
.spin-btns i { height: 10px; background: #f5e6e8; border: 1px solid #c0b8ba; display: flex; align-items: center; justify-content: center; }
.spin-btns i::after { content: ""; border-left: 4px solid transparent; border-right: 4px solid transparent; }
.spin-btns .up::after { border-bottom: 4px solid #000; }
.spin-btns .down::after { border-top: 4px solid #000; }

.row-dob { margin: 28px 0 0 25px; height: 24px; display: grid; grid-template-columns: 151px 143px; align-items: center; }

.group-addr { margin: 16px 0 0 13px; width: 1064px; height: 338px; display: grid; grid-template-columns: 213px 314px 1px 1fr; padding-left: 11px; }
.addr-labels { display: grid; grid-template-rows: 75px 68px 70px 30px; align-content: start; padding-top: 41px; }
.addr-labels .lbl { line-height: 30px; height: 30px; }
.addr-fields { display: grid; grid-template-rows: 62px 75px 76px 38px; align-content: start; padding-top: 36px; }
.addr-fields .field { width: 289px; height: 38px; box-shadow: inset 0 0 0 2px #fff; }
.addr-divider { width: 1px; height: 313px; background: #ad8089; margin-top: 11px; }
.addr-right { padding: 45px 0 0 35px; display: grid; grid-template-rows: 64px 64px 64px 63px; align-content: start; }
.ar-row { display: flex; align-items: center; width: 463px; }
.ar-row .lbl { padding-top: 3px; }
.lbl-city { width: 52px; }
.lbl-pin { width: 95px; }
.f-city { width: 411px; height: 26px; }
.f-pin { width: 369px; height: 26px; }
.combo { width: 226px; height: 25px; margin-left: auto; margin-right: 1px; border-top: 2px solid #7b4b55; border-left: 1px solid #7b4b55; border-bottom: 1px solid #ffe6ea; border-right: 1px solid #ffe6ea; display: flex; align-items: center; justify-content: space-between; padding-left: 3px; font-size: 14.500px; }
.combo-btn { width: 19px; height: 21px; margin-right: 1px; background: #ffdce2; border-top: 1px solid #fff; border-left: 1px solid #fff; border-right: 1px solid #7b4b55; border-bottom: 1px solid #7b4b55; display: flex; align-items: center; justify-content: center; }
.combo-btn::after { content: ""; border-left: 4px solid transparent; border-right: 4px solid transparent; border-top: 5px solid #000; }

.row-actions { margin: 37px 0 0 125px; display: grid; grid-template-columns: 134px 204px 450px; align-items: start; }
.your-image { margin-top: 33px; font-style: italic; text-decoration: underline; font-size: 15px; line-height: 22px; white-space: nowrap; }
.btn { display: flex; align-items: center; justify-content: center; white-space: nowrap; font-size: 15.300px; }
.btn-choose { margin-top: 28px; width: 153px; height: 31px; border-right: 1px solid #7b4b55; border-bottom: 2px solid #7b4b55; }
.btn-click { width: 450px; height: 51px; border-top: 1px solid #ffe6ea; border-right: 1px solid #6b4b50; border-bottom: 2px solid #6b4b50; }
```
